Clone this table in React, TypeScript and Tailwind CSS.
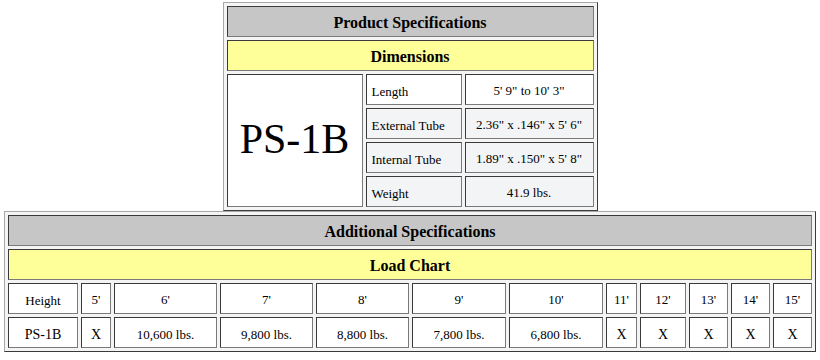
import React from "react";

// cell with the sunken edge of an old border=1 table
const cell =
  "border border-t-[#3a3a3a] border-l-[#3a3a3a] border-b-[#7a7a7a] border-r-[#7a7a7a] flex items-center";

const dims = [
  { label: "Length", value: `5' 9" to 10' 3"`, white: true },
  { label: "External Tube", value: `2.36" x .146" x 5' 6"`, white: false },
  { label: "Internal Tube", value: `1.89" x .150" x 5' 8"`, white: false },
  { label: "Weight", value: "41.9 lbs.", white: false },
];

const heights = ["5'", "6'", "7'", "8'", "9'", "10'", "11'", "12'", "13'", "14'", "15'"];
const loads = ["X", "10,600 lbs.", "9,800 lbs.", "8,800 lbs.", "7,800 lbs.", "6,800 lbs.", "X", "X", "X", "X", "X"];

const App = () => {
  return (
    <div className="bg-white w-[820px] h-[360px] pt-[2px] flex flex-col items-center text-black font-['Liberation_Serif','Times_New_Roman',serif]">
      {/* Product Specifications */}
      <div className="bg-[#f4f4f4] border border-t-[#a8a8a8] border-l-[#a8a8a8] border-b-[#3a3a3a] border-r-[#3a3a3a] p-[3px] grid grid-cols-[136px_96px_129px] auto-rows-[31px] gap-[3px]">
        <div className={`${cell} col-span-3 justify-center bg-[#c6c6c6] font-bold text-[16px] pt-[2px]`}>
          Product Specifications
        </div>
        <div className={`${cell} col-span-3 justify-center bg-[#ffff99] font-bold text-[16px] pt-[2px]`}>
          Dimensions
        </div>
        <div className={`${cell} row-span-4 justify-center bg-white text-[42px] pb-[2px]`}>
          PS-1B
        </div>
        {dims.map((d) => (
          <React.Fragment key={d.label}>
            <div
              className={`${cell} pl-[5px] text-[13px] pt-[5px] ${d.white ? "bg-white" : "bg-[#f3f4f6]"}`}
            >
              {d.label}
            </div>
            <div
              className={`${cell} justify-center text-[13px] pt-[3px] ${d.white ? "bg-white" : "bg-[#f3f4f6]"}`}
            >
              {d.value}
            </div>
          </React.Fragment>
        ))}
      </div>

      {/* Additional Specifications / Load Chart */}
      <div className="bg-[#f4f4f4] border border-t-[#a8a8a8] border-l-[#a8a8a8] border-b-[#3a3a3a] border-r-[#3a3a3a] p-[3px] grid grid-cols-[70px_30px_103px_93px_93px_94px_94px_31px_46px_39px_39px_39px] auto-rows-[31px] gap-[3px]">
        <div className={`${cell} col-span-12 justify-center bg-[#c6c6c6] font-bold text-[16px] pt-[2px]`}>
          Additional Specifications
        </div>
        <div className={`${cell} col-span-12 justify-center bg-[#ffff99] font-bold text-[16px] pt-[2px]`}>
          Load Chart
        </div>
        <div className={`${cell} justify-center bg-white text-[13px] pt-[4px]`}>Height</div>
        {heights.map((h) => (
          <div key={h} className={`${cell} justify-center bg-white text-[13px] pt-[3px]`}>
            {h}
          </div>
        ))}
        <div className={`${cell} justify-center bg-white text-[14px] pt-[3px]`}>PS-1B</div>
        {loads.map((l, i) => (
          <div
            key={i}
            className={`${cell} justify-center bg-white pt-[4px] ${l === "X" ? "text-[14px]" : "text-[13px]"}`}
          >
            {l}
          </div>
        ))}
      </div>
    </div>
  );
};

export default App;
